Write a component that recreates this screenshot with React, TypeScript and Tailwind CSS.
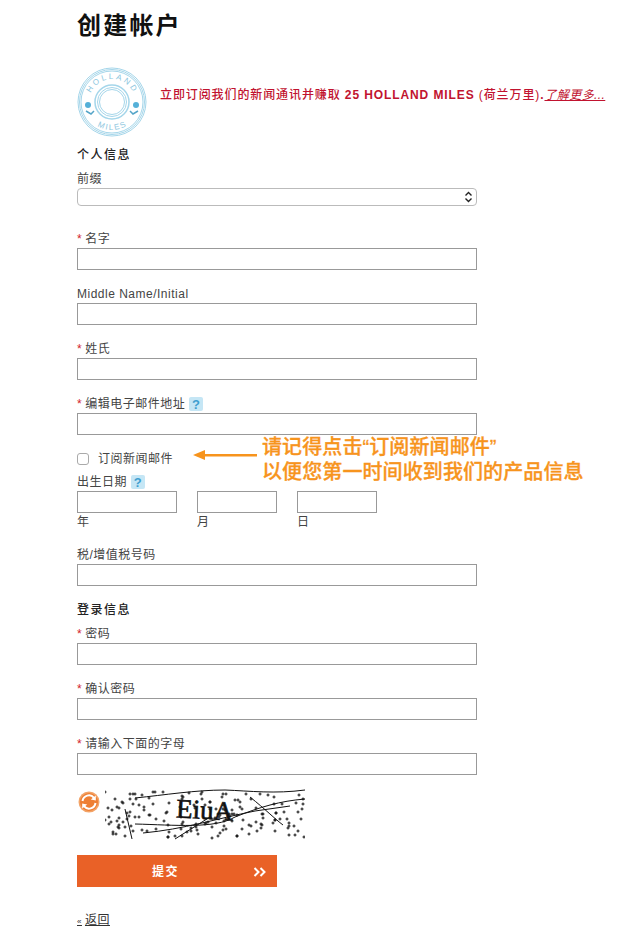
const font = "[font-family:'Liberation_Sans','Noto_Sans_CJK_SC',sans-serif]";

function Field({ label, required, help, className = "" }: { label: string; required?: boolean; help?: boolean; className?: string }) {
  return (
    <div className={className}>
      <div className="flex h-[20px] items-center pt-[2px] text-[12px] leading-[20px] tracking-[0.5px] text-[#444]">
        {required && <span className="mr-[3px] text-[#d2232a]">*</span>}
        {label}
        {help && <Help />}
      </div>
      <input className="block h-[22px] w-[400px] border border-[#999] bg-white" />
    </div>
  );
}

function Help() {
  return (
    <span className="ml-[4px] flex h-[14px] w-[14px] items-center justify-center rounded-[2px] bg-[#c5e6f5] text-[13px] font-bold leading-none text-[#3f9fd0]">
      ?
    </span>
  );
}

function Logo() {
  return (
    <svg width="70" height="70" viewBox="0 0 70 70" className="shrink-0">
      <g fill="none" stroke="#a5d6ea">
        <circle cx="35" cy="35" r="34" />
        <circle cx="35" cy="35" r="32.5" />
        <circle cx="35" cy="35" r="31" />
        <circle cx="35" cy="35" r="17" strokeWidth="1.5" />
        <circle cx="35" cy="35" r="14.5" />
        <circle cx="35" cy="35" r="12.5" />
      </g>
      <defs>
        <path id="logo-top" d="M12 35 A23 23 0 0 1 58 35" />
        <path id="logo-bottom" d="M10.75 49 A28 28 0 0 0 59.25 49" />
      </defs>
      <text fontSize="8" fill="#8cc6de" letterSpacing="2.4" fontFamily="Liberation Sans">
        <textPath href="#logo-top" startOffset="9">HOLLAND</textPath>
      </text>
      <text fontSize="8" fill="#8cc6de" letterSpacing="1.5" fontFamily="Liberation Sans">
        <textPath href="#logo-bottom" startOffset="14">MILES</textPath>
      </text>
      <circle cx="11" cy="38" r="3" fill="#55b0d8" />
      <circle cx="59" cy="38" r="3" fill="#55b0d8" />
      <path d="M9 44 L14 47 L17 44" fill="none" stroke="#55a5c8" strokeWidth="1.5" />
      <path d="M61 44 L56 47 L53 44" fill="none" stroke="#55a5c8" strokeWidth="1.5" />
    </svg>
  );
}

function Refresh() {
  return (
    <svg width="22" height="22" viewBox="0 0 22 22" className="mt-[2px] shrink-0">
      <circle cx="11" cy="11" r="10.5" fill="#f3a468" />
      <circle cx="11" cy="11" r="9" fill="#ee7f33" />
      <path d="M4.5 10 A6.5 6.5 0 0 1 16 6.8" fill="none" stroke="#fff" strokeWidth="2" />
      <path d="M17.5 12 A6.5 6.5 0 0 1 6 15.2" fill="none" stroke="#fff" strokeWidth="2" />
      <path d="M17.8 4.5 L17.8 9.5 L12.8 8.5 Z" fill="#fff" />
      <path d="M4.2 17.5 L4.2 12.5 L9.2 13.5 Z" fill="#fff" />
    </svg>
  );
}

// fixed pseudo random speckle for the captcha
const specks = Array.from({ length: 170 }, (_, i) => ({
  x: ((i * 73 + (i * i) % 37) * 7) % 200,
  y: 3 + ((i * 41 + (i * i * 3) % 29) * 3) % 47,
}));

function Captcha() {
  return (
    <svg width="200" height="52" viewBox="0 0 200 52" className="shrink-0">
      {specks.map((s, i) => (
        <path key={i} d={`M${s.x - 1.5} ${s.y}h3M${s.x} ${s.y - 1.5}v3`} stroke="#111" strokeWidth="1" />
      ))}
      <g fill="none" stroke="#111" strokeWidth="1">
        <path d="M30 9 C60 6 90 1 120 1 C145 2 170 5 200 1" />
        <path d="M30 35 C70 36 110 40 130 28 C155 18 175 12 200 10" />
        <path d="M38 44 C80 40 110 30 150 22 L185 17" />
        <path d="M20 20 L27 50" />
        <path d="M145 8 C160 20 170 30 178 36" />
        <path d="M70 50 L105 28" />
      </g>
      <text x="71" y="30" fontSize="27" fill="#111" fontFamily="Liberation Serif" transform="rotate(3 100 25)" stroke="#111" strokeWidth="0.6">
        EiuA
      </text>
    </svg>
  );
}

export default function App() {
  return (
    <div className={`relative min-h-[935px] w-[622px] overflow-hidden bg-white pl-[77px] pt-[11px] ${font}`}>
      <h1 className="text-[24px] font-bold leading-[30px] tracking-[2.2px] text-[#111]">创建帐户</h1>

      <div className="mt-[26px] flex h-[70px] items-center">
        <Logo />
        <p className="mb-[14px] ml-[13px] whitespace-nowrap text-[12px] font-medium tracking-[0.9px] text-[#c1132f]">
          立即订阅我们的新闻通讯并赚取 <b>25 HOLLAND MILES</b> (荷兰万里)<b>.</b>
          <a className="font-normal italic tracking-[0.4px] underline">了解更多...</a>
        </p>
      </div>

      <h2 className="mt-[8px] text-[12px] font-medium leading-[20px] tracking-[1.5px] text-[#222]">个人信息</h2>

      <div className="mt-[4px]">
        <div className="h-[20px] text-[12px] leading-[20px] tracking-[0.5px] text-[#444]">前缀</div>
        <div className="mt-[-1px] flex h-[18px] w-[400px] items-center justify-end rounded-[4px] border border-[#bbb] bg-white pr-[3px]">
          <svg width="9" height="12" viewBox="0 0 9 12">
            <path d="M1.5 4.5 L4.5 1.5 L7.5 4.5 M1.5 7.5 L4.5 10.5 L7.5 7.5" fill="none" stroke="#222" strokeWidth="1.4" />
          </svg>
        </div>
      </div>

      <Field label="名字" required className="mt-[22px]" />
      <Field label="Middle Name/Initial" className="mt-[13px]" />
      <Field label="姓氏" required className="mt-[13px]" />
      <Field label="编辑电子邮件地址" required help className="mt-[13px]" />

      <label className="mt-[14px] flex h-[20px] items-center text-[12px] tracking-[0.5px] text-[#444]">
        <span className="h-[12px] w-[12px] rounded-[3px] border border-[#aaa] bg-white" />
        <span className="ml-[9px]">订阅新闻邮件</span>
      </label>

      <div className="mt-[3px] flex h-[20px] items-center text-[12px] tracking-[0.5px] text-[#444]">
        出生日期
        <Help />
      </div>
      <div className="mt-[-1px] flex gap-[20px] text-[12px] leading-[19px] text-[#444]">
        {[
          { part: "年", width: "w-[100px]" },
          { part: "月", width: "w-[80px]" },
          { part: "日", width: "w-[80px]" },
        ].map(({ part, width }) => (
          <div key={part}>
            <input className={`block h-[22px] border border-[#999] bg-white ${width}`} />
            <span>{part}</span>
          </div>
        ))}
      </div>

      <Field label="税/增值税号码" className="mt-[12px]" />

      <h2 className="mt-[14px] text-[12px] font-medium leading-[20px] tracking-[1.5px] text-[#222]">登录信息</h2>

      <Field label="密码" required className="mt-[3px]" />
      <Field label="确认密码" required className="mt-[13px]" />
      <Field label="请输入下面的字母" required className="mt-[13px]" />

      <div className="mt-[14px] flex h-[51px] items-start">
        <div className="ml-[1px]">
          <Refresh />
        </div>
        <div className="ml-[5px]">
          <Captcha />
        </div>
      </div>

      <button className="mt-[15px] flex h-[32px] w-[200px] items-center bg-[#e96127] pt-[2px] text-[12px] font-bold tracking-[1.5px] text-white">
        <span className="ml-[75px]">提交</span>
        <svg width="13" height="10" viewBox="0 0 13 10" className="ml-[74px]">
          <path d="M1.5 1 L5.5 5 L1.5 9 M7.5 1 L11.5 5 L7.5 9" fill="none" stroke="#fff" strokeWidth="2" />
        </svg>
      </button>

      <a className="mt-[24px] flex w-fit items-baseline gap-[3px] text-[12px] leading-[18px] tracking-[0.5px] text-[#333] underline">
        <span className="text-[8px]">«</span>
        返回
      </a>

      {/* reminder pasted over the form */}
      <div className="absolute left-[193px] top-[435px] flex items-start">
        <svg width="64" height="12" viewBox="0 0 64 12" className="mt-[14px] shrink-0">
          <path d="M0 6 L12 1 L12 5 L64 5 L64 7.5 L12 7.5 L12 11 Z" fill="#f7941d" />
        </svg>
        <p className="ml-[5px] whitespace-nowrap text-[20px] font-medium leading-[25px] tracking-[0.1px] text-[#f7941d] [-webkit-text-stroke:0.3px_#f7941d]">
          请记得点击“订阅新闻邮件”
          <br />
          以便您第一时间收到我们的产品信息
        </p>
      </div>
    </div>
  );
}
